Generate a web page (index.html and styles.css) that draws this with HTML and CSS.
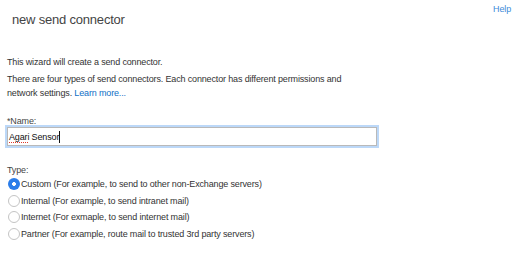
FILE: index.html
```html
<!DOCTYPE html>
<html lang="en">
	<head>
		<meta charset="UTF-8" />
		<meta name="viewport" content="width=device-width, initial-scale=1.0" />
		<title>new send connector</title>
		<link rel="stylesheet" href="styles.css">
	</head>
	<body>
		<header class="top">
			<h1 class="title">new send connector</h1>
			<a class="help" href="#">Help</a>
		</header>
		<section class="wizard">
			<p class="intro">This wizard will create a send connector.</p>
			<p class="desc">There are four types of send connectors. Each connector has different permissions and network settings. <a href="#">Learn more...</a></p>

			<div class="field name">
				<label for="name">*Name:</label>
				<div class="textbox" id="name"><span class="misspelled">Agari</span> Sensor<span class="caret"></span></div>
			</div>

			<div class="field type">
				<span class="label">Type:</span>
				<ul class="types">
					<li><span class="radio checked"></span>Custom (For example, to send to other non-Exchange servers)</li>
					<li><span class="radio"></span>Internal (For example, to send intranet mail)</li>
					<li><span class="radio"></span>Internet (For exmaple, to send internet mail)</li>
					<li><span class="radio"></span>Partner (For example, route mail to trusted 3rd party servers)</li>
				</ul>
			</div>
		</section>
	</body>
</html>
```

FILE: styles.css
```css
* {
	padding: 0;
	margin: 0;
	border: 0;
	box-sizing: border-box;
}
a {
	text-decoration: none;
	color: #0f6fc6;
}
li {
	list-style: none;
}

body {
	font-family: "Liberation Sans", Arial, sans-serif;
	font-size: 9px;
	letter-spacing: -0.15px;
	color: #333;
	background: #fff;
	width: 517px;
	height: 263px;
}

.top {
	display: flex;
	justify-content: space-between;
	align-items: flex-start;
	height: 30px;
}

.title {
	padding: 10px 0 0 12px;
	font-size: 13px;
	line-height: 20px;
	font-weight: normal;
	letter-spacing: -0.2px;
	color: #444;
}

.help {
	padding: 2px 6px 0 0;
	line-height: 14px;
	color: #3d8bd9;
}

.wizard {
	padding: 25px 0 0 7px;
}

.intro {
	line-height: 14px;
	margin-bottom: 3px;
}

.desc {
	width: 350px;
	line-height: 14px;
}

.field label,
.field .label {
	display: block;
	line-height: 12px;
	color: #444;
}

.name {
	margin-top: 15px;
}

.textbox {
	display: flex;
	align-items: center;
	width: 370px;
	height: 19px;
	padding: 0 1px;
	border: 1px solid #b9b9b9;
	outline: 2px solid #bcd8f8;
	color: #111;
	white-space: pre;
}

.misspelled {
	text-decoration: underline dotted #e0392b;
	text-decoration-thickness: 1px;
	text-underline-offset: 2px;
}

.caret {
	width: 1px;
	height: 12px;
	background: #111;
}

.type {
	margin-top: 18px;
}

.types li {
	display: flex;
	align-items: center;
	height: 16.5px;
}

.radio {
	width: 12px;
	height: 12px;
	border: 1px solid #c4c4c4;
	border-radius: 50%;
	margin: 0 1px;
	flex: none;
}

.radio.checked {
	border: 0;
	background: radial-gradient(circle, #fff 0 1.6px, #2b7de9 2.2px);
}
```
